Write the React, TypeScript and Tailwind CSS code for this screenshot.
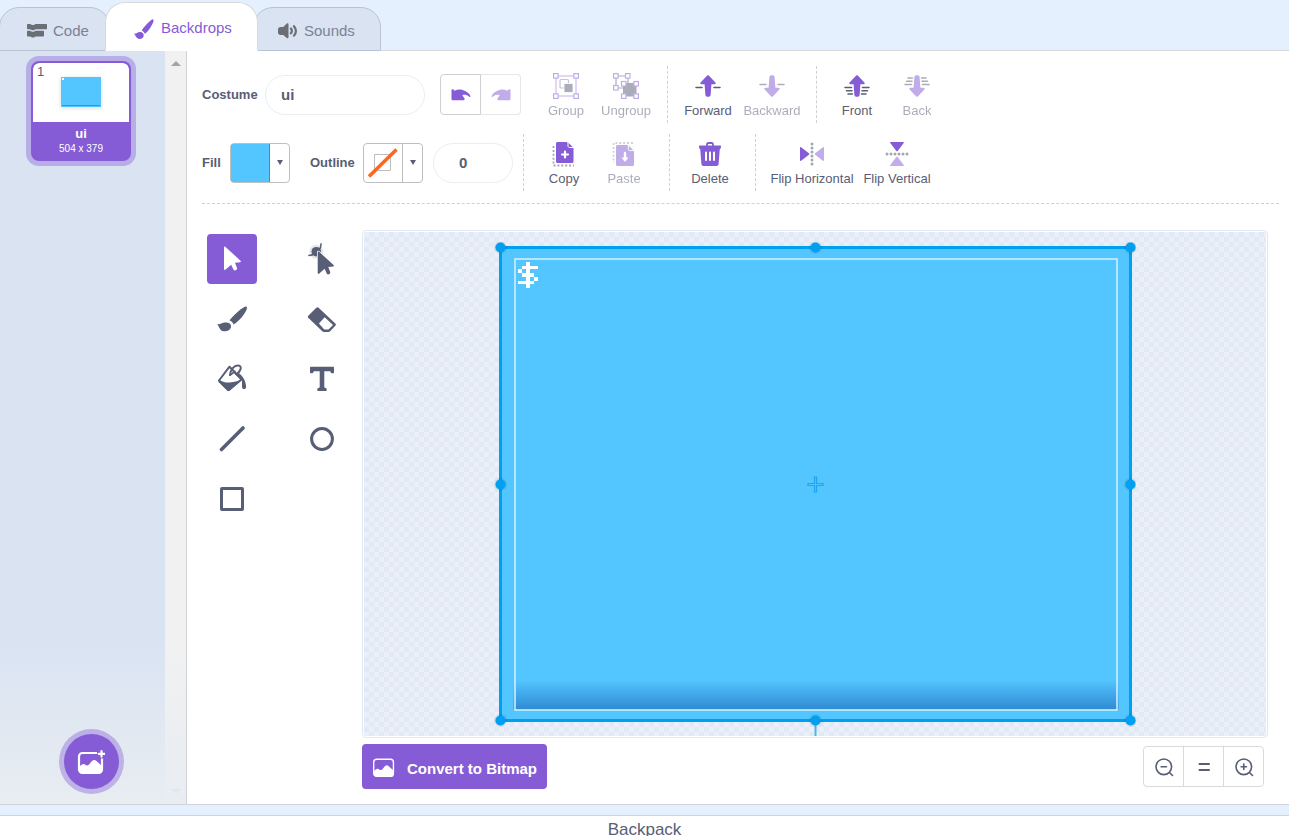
import { useState } from "react";
import type { ReactNode } from "react";
import clsx from "clsx";

const PURPLE = "#855cd6";
const INK = "#575e75";

/* Icons */

function BrushIcon({ className }: { className: string }) {
  return (
    <svg viewBox="0 0 20 20" className={className} fill="currentColor" aria-hidden="true">
      <path d="M19 .5c.7.5.7 1.500.2 2.800-1.300 3.200-3.900 7.300-6.200 9.800-.8.800-1.500 1.400-2.400 1.700-.3-1.600-1.200-2.600-2.700-3.100.2-.9.7-1.700 1.400-2.600C11.500 6.200 14.700 2.700 17.200.9c.8-.6 1.400-.7 1.800-.4z" />
      <path d="M.2 15c-.2-.4.1-.6.5-.4.8.3 1.300.1 2.200-.6 1.100-.8 2.400-1.300 4-1 2.300.4 3.200 2.400 2.700 4.300-.6 2-2.600 2.900-4.700 2.600-2.100-.4-2.900-1.900-3.700-3.600-.2-.5-.6-.8-1-1.300z" />
    </svg>
  );
}

function CodeIcon() {
  return (
    <svg viewBox="0 0 20 14" className="h-3.5 w-5" fill="#6b6f75" aria-hidden="true">
      <path d="M0 .8C0 .3.3 0 .8 0h2.400c.6 0 .8 1 2 1h1.300c1.200 0 1.400-1 2-1h10.700c.5 0 .8.3.8.800v3.700c0 .5-.3.8-.8.8H8.500c-.6 0-.8 1-2 1H5.200c-1.200 0-1.400-1-2-1H.8c-.5 0-.8-.3-.8-.8z" />
      <path d="M0 7.500c0-.5.3-.8.800-.8h2.400c.6 0 .8 1 2 1h1.300c1.200 0 1.400-1 2-1h7.700c.5 0 .8.3.8.800v4.200c0 .5-.3.8-.8.8H8.500c-.6 0-.8 1-2 1H5.200c-1.200 0-1.400-1-2-1H.8c-.5 0-.8-.3-.8-.8z" />
    </svg>
  );
}

function SoundIcon() {
  return (
    <svg viewBox="0 0 20 16" className="h-4 w-5" fill="#6b6f75" aria-hidden="true">
      <path d="M8.800.5c.7-.5 1.700-.1 1.700.8v13c0 .9-1 1.300-1.700.8L5.200 12H2.500C1 12 0 11 0 9.500v-3C0 5 1 3.900 2.500 3.900h2.700z" />
      <path d="M12.900 5.500q1.900 2.400 0 4.800M16 3.200q3.800 4.700 0 9.400" fill="none" stroke="#6b6f75" strokeWidth="2.200" strokeLinecap="round" />
    </svg>
  );
}

function UndoIcon({ className }: { className?: string }) {
  return (
    <svg viewBox="0 0 20 12" className={clsx("h-3 w-5", className)} fill={PURPLE} aria-hidden="true">
      <path d="M.5 1.500C.5.300 1.800-.1 2.700.8l1 .9C6 .5 8.500.200 11.500.900c4 1 6.800 3.300 7.900 6.100.3.8-.6 1.300-1.200.7-1.500-1.400-3.200-2-5.200-2-1.500 0-1.900.5-1.200 1.300l1.400 1.900c.8 1 .4 2.400-1 2.400H1.800C1 11.300.5 10.700.5 10z" />
    </svg>
  );
}

function Handles({ points }: { points: number[][] }) {
  return (
    <g fill="#fff" stroke={PURPLE} strokeWidth="1.200">
      {points.map(([x, y]) => (
        <rect key={`${x}-${y}`} x={x} y={y} width="4.500" height="4.500" />
      ))}
    </g>
  );
}

function GroupIcon() {
  return (
    <svg viewBox="0 0 26 26" className="size-[26px]" aria-hidden="true">
      <path d="M3 3h20v20H3z" fill="none" stroke={PURPLE} />
      <rect x="7" y="6.500" width="8.500" height="8.500" rx="1" fill="none" stroke={INK} strokeOpacity=".7" strokeWidth="1.200" />
      <rect x="11" y="10.500" width="9" height="9" rx="1" fill={INK} stroke="#fff" strokeWidth=".8" />
      <Handles points={[[.6, .6], [20.900, .6], [.6, 20.900], [20.900, 20.900]]} />
    </svg>
  );
}

function UngroupIcon() {
  return (
    <svg viewBox="0 0 26 26" className="size-[26px]" aria-hidden="true">
      <path d="M3 3h12v12H3z" fill="none" stroke={INK} strokeWidth="1.200" />
      <rect x="10" y="10" width="13.500" height="13.500" rx="3" fill={INK} />
      <Handles points={[[.6, .6], [12.500, .6], [.6, 12.500], [8.500, 8.500], [20.900, 8.500], [8.500, 20.900], [20.900, 20.900]]} />
    </svg>
  );
}

const ARROW_UP = "M12.200 2.600c.5-.6 1.100-.6 1.600 0l6.600 7c.7.800.3 1.700-.7 1.700h-3.300l-.8 10.700c-.1 1.200-.9 1.800-2.600 1.800s-2.500-.6-2.600-1.800L9.600 11.300H6.300c-1 0-1.400-.9-.7-1.700z";

function ArrowIcon({ down = false, lines }: { down?: boolean; lines: string }) {
  return (
    <svg viewBox="0 0 26 26" className="size-[26px]" aria-hidden="true">
      <g transform={down ? "rotate(180 13 13)" : undefined}>
        <path d={lines} stroke={INK} strokeWidth="1.500" strokeLinecap="round" />
        <path d={ARROW_UP} fill={PURPLE} />
      </g>
    </svg>
  );
}

const ONE_LINE = "M1 14.500h6M19 14.500h6";
const MANY_LINES = "M1 14.500h6.500M18.500 14.500H25M2.500 17.700h5.500M18 17.700h5.500M4 20.900h4.500M17.500 20.900H22";

function CopyIcon() {
  return (
    <svg viewBox="0 0 26 26" className="size-[26px]" aria-hidden="true">
      <path d="M2.500 5v19.500H23" fill="none" stroke={INK} strokeOpacity=".55" strokeWidth="1.800" strokeDasharray="2 1.900" />
      <path d="M6.500 1H16l6.500 6.500v13c0 .9-.6 1.500-1.500 1.500H6.500c-.9 0-1.500-.6-1.500-1.500v-18C5 1.600 5.600 1 6.500 1z" fill={PURPLE} />
      <path d="M17 .8l5.800 5.700h-4.300c-.9 0-1.500-.6-1.500-1.500z" fill={PURPLE} stroke="#fff" strokeWidth="1" />
      <path d="M14 10.500v6M11 13.500h6" stroke="#fff" strokeWidth="2.200" strokeLinecap="round" />
    </svg>
  );
}

function PasteIcon() {
  return (
    <svg viewBox="0 0 26 26" className="size-[26px]" aria-hidden="true">
      <path d="M22 2H2.500v20" fill="none" stroke={INK} strokeOpacity=".55" strokeWidth="1.800" strokeDasharray="2 1.900" />
      <path d="M6.500 4H17l6 6v13.500c0 .9-.6 1.500-1.500 1.500h-15c-.9 0-1.500-.6-1.500-1.500v-18C5 4.600 5.600 4 6.500 4z" fill={PURPLE} />
      <path d="M17.300 3.700l5.900 5.900h-4.400c-.9 0-1.500-.6-1.500-1.500z" fill={PURPLE} stroke="#fff" strokeWidth="1" />
      <path d="M14 12v6" stroke="#fff" strokeWidth="2.400" strokeLinecap="round" />
      <path d="M10.500 16.500h7L14 21z" fill="#fff" />
    </svg>
  );
}

function TrashIcon() {
  return (
    <svg viewBox="0 0 26 26" className="size-[26px]" aria-hidden="true">
      <path d="M10 5V3.500c0-1 .5-1.500 1.300-1.500h3.400c.8 0 1.300.5 1.300 1.500V5" fill="none" stroke={PURPLE} strokeWidth="1.800" />
      <path d="M3.200 4.500h19.600c.9 0 1.300.5 1.200 1.300l-.2 1.200c-.1.600-.4.900-1 1l-1.200 15c-.1 1.200-.9 2-2.100 2H6.500c-1.200 0-2-.8-2.100-2L3.200 8c-.6-.1-.9-.4-1-1L2 5.800c-.1-.8.3-1.300 1.200-1.300z" fill={PURPLE} />
      <path d="M9 11.500v7.500M13 11.500v7.500M17 11.500v7.500" stroke="#fff" strokeWidth="2" strokeLinecap="round" />
    </svg>
  );
}

function FlipIcon({ vertical = false }: { vertical?: boolean }) {
  return (
    <svg viewBox="0 0 26 26" className="size-[26px]" aria-hidden="true">
      <g transform={vertical ? "rotate(90 13 13)" : undefined}>
        <path d="M1 6.800c0-.7.600-.9 1.100-.5l7.800 6c.5.400.5 1 0 1.400l-7.800 6c-.5.400-1.100.2-1.100-.5z" fill={PURPLE} />
        <path d="M25 6.800c0-.7-.6-.9-1.100-.5l-7.800 6c-.5.400-.5 1 0 1.400l7.800 6c.5.400 1.100.2 1.100-.5z" fill={PURPLE} fillOpacity=".5" />
        <g fill={INK} fillOpacity=".55">
          {[3, 7, 11, 15, 19, 23].map((y) => (
            <circle key={y} cx="13" cy={y} r="1.500" />
          ))}
        </g>
      </g>
    </svg>
  );
}

function ImageIcon({ plus = false, className }: { plus?: boolean; className: string }) {
  return (
    <svg viewBox="0 0 28 26" className={className} aria-hidden="true">
      <rect x="2" y="4" width="23" height="20" rx="3.500" fill="none" stroke="#fff" strokeWidth={plus ? 2.200 : 1.600} />
      <path d="M2 18c2-2 4-4 6-2.500 1.500 1.200 2.500 1.500 4 0l3-3.500c1.500-1.500 3-1.500 4.500 0L25 17v3.500c0 2-1.500 4-3.500 4h-16c-2 0-3.500-2-3.500-4z" fill="#fff" />
      {plus && (
        <>
          <path d="M20 0h8v9.500h-8z" fill={PURPLE} />
          <path d="M24.500 2v5.600M21.700 4.800h5.600" stroke="#fff" strokeWidth="2.200" strokeLinecap="round" />
        </>
      )}
    </svg>
  );
}

const POINTER = "M12 8.500c0-.9.9-1.200 1.500-.6l15 13.800c.7.700.4 1.500-.5 1.500l-5 .6 2 5.200c.7 2-2.700 3.500-3.600 1.500l-2.200-4.800-5.600 4.900c-.7.600-1.600.3-1.600-.6z";

const TOOLS: { name: string; icon: ReactNode }[] = [
  {
    name: "Select",
    icon: <path d={POINTER} fill="currentColor" />,
  },
  {
    name: "Reshape",
    icon: (
      <>
        <circle cx="14.300" cy="12.700" r="7" fill="#575e75" fillOpacity=".15" />
        <circle cx="14.300" cy="12.700" r="4.800" fill="currentColor" />
        <path d="M6.300 16.500q5 0 6.500-2.500M19 4.300q.3 4-2 6.500" fill="none" stroke="currentColor" strokeWidth="1.500" />
        <path d={POINTER} transform="translate(4.200 5.200) scale(.96)" fill="currentColor" stroke="#fff" strokeWidth="1.600" paintOrder="stroke" />
      </>
    ),
  },
  {
    name: "Brush",
    icon: (
      <svg x="5" y="7" width="30" height="26" viewBox="0 0 30 26" fill="currentColor">
        <path d="M29.500.8c.8.600.5 2-.4 3.900-2 4-5.800 8.600-9.400 11.600-1.300 1.100-2.200 1.700-3.200 2.200-.5-2-1.700-3.300-3.900-4 .4-.9 1.300-2 2.500-3.200C18.200 8 22.700 3.500 26.900 1.200c1.200-.6 2.100-.8 2.600-.4z" />
        <path d="M.4 18.500c-.2-.4.100-.7.600-.5 1 .4 1.800.300 3-.4 1.600-.8 3.500-1.300 5.800-1.100 3.200.2 4.700 2.500 4.100 5-.8 2.800-4 4.200-7.300 3.700-3-.4-4-2.600-4.900-4.800-.3-.7-.8-1.200-1.300-1.900z" />
      </svg>
    ),
  },
  {
    name: "Eraser",
    icon: (
      <>
        <path d="M14.300 8.800c.8-.8 1.500-.8 2.300 0L33.300 24.500c.8.800.8 1.500 0 2.300l-5.200 5.400c-.6.600-1 .8-1.700.8H22c-.7 0-1.200-.2-1.700-.7L6.500 19c-.8-.8-.8-1.700 0-2.500z" fill="currentColor" />
        <path d="M22.700 18.300l8.300 7.700-4.500 4.500h-4.200l-5.400-6z" fill="#fff" />
      </>
    ),
  },
  {
    name: "Fill",
    icon: (
      <>
        <path d="M17.500 7.700L7 21.500l9.500 9.500 13-10.500z" fill="none" stroke="currentColor" strokeWidth="2" strokeLinejoin="round" />
        <path d="M6.500 20.500c4 2.500 7 3.300 11.500 3 4.500-.5 7-1.500 12-2.500L18 31.500c-.9.800-2 .8-2.900 0L6.500 23z" fill="currentColor" />
        <path d="M22 14.500l8 6.500v6.500c0 3.800 4.300 3.500 4.100 0C33.800 22 31 17 27 14.200" fill="currentColor" />
        <path d="M18 16c.5-5 4-10 8.500-9.500 4.500.8 1.500 6.500-2 8.500" fill="none" stroke="currentColor" strokeWidth="2" strokeLinecap="round" />
        <path d="M17.500 16.500l6-4.500" stroke="currentColor" strokeWidth="1.600" />
      </>
    ),
  },
  {
    name: "Text",
    icon: <path d="M9 7.700h22c.6 0 1 .4 1 1v4.500c0 .6-.4 1-1 1h-1.200c-.6 0-1-.3-1.200-.9l-.3-1H22.300v16.200l1.500.4c.6.200.9.600.9 1.100v1c0 .6-.4 1-1 1h-7.400c-.6 0-1-.4-1-1v-1c0-.5.3-.9.9-1.100l1.500-.4V12.300h-6l-.3 1c-.2.600-.6.900-1.200.9H9c-.6 0-1-.4-1-1V8.700c0-.6.4-1 1-1z" fill="currentColor" />,
  },
  {
    name: "Line",
    icon: <path d="M9.500 30.500l21.500-21.500" stroke="currentColor" strokeWidth="3.600" strokeLinecap="round" />,
  },
  {
    name: "Circle",
    icon: <circle cx="20" cy="20" r="10.400" fill="none" stroke="currentColor" strokeWidth="3" />,
  },
  {
    name: "Rectangle",
    icon: <rect x="9.500" y="9.500" width="21" height="21" rx=".5" fill="none" stroke="currentColor" strokeWidth="3" />,
  },
];

/* Small parts */

interface ActionProps {
  label: string;
  icon: ReactNode;
  disabled?: boolean;
  className?: string;
}

function Action({ label, icon, disabled, className = "w-15" }: ActionProps) {
  return (
    <button
      disabled={disabled}
      className={clsx("flex flex-col items-center gap-0.5 pt-1 text-[13px] leading-5 whitespace-nowrap disabled:opacity-50", className)}
    >
      {icon}
      {label}
    </button>
  );
}

function Divider({ className }: { className: string }) {
  return <div className={clsx("h-[57px] shrink-0 border-l border-dashed border-[#d0d0d0]", className)} />;
}

interface SwatchProps {
  id: string;
  children: ReactNode;
}

function Swatch({ id, children }: SwatchProps) {
  return (
    <button id={id} className="flex h-10 w-15 overflow-hidden rounded border border-[#bfbfbf]">
      {children}
      <span className="flex h-full flex-1 items-center justify-center">
        <svg viewBox="0 0 6 5" className="h-[5px] w-1.5" aria-hidden="true">
          <path d="M0 0h6L3 5z" fill={INK} />
        </svg>
      </span>
    </button>
  );
}

function Tabs() {
  const tab = "flex items-center rounded-t-[20px] border";
  const idle = "h-11 border-[#b9c3d3] bg-[#d9e3f2] text-[#7c8294]";
  return (
    <nav className="flex h-[51px] items-end text-[15px]">
      <button className={clsx(tab, idle, "-ml-px w-[111px] gap-1.5 pt-1 pl-[27px]")}>
        <CodeIcon />
        Code
      </button>
      <button className={clsx(tab, "z-10 -ml-[5px] h-[49px] w-[153px] gap-[7px] border-[#d9d9d9] border-b-white bg-white pt-1 pl-7 text-[#855cd6]")}>
        <BrushIcon className="size-5" />
        Backdrops
      </button>
      <button className={clsx(tab, idle, "-ml-[5px] w-32 gap-1.5 pt-1 pl-6")}>
        <SoundIcon />
        Sounds
      </button>
      <div className="flex-1 self-end border-b border-[#d9d9d9]" />
    </nav>
  );
}

function Sidebar() {
  return (
    <aside className="relative flex w-[187px] shrink-0 border-r border-[#d0d3d8] bg-[#d9e3f2]">
      <div className="flex-1 pt-2.5 pl-[31px]">
        <button className="flex size-[100px] flex-col overflow-hidden rounded-lg border-2 border-[#855cd6] bg-[#855cd6] ring-5 ring-[#855cd6]/40">
          <div className="flex h-[59px] w-full items-start rounded-t-md bg-white pl-1">
            <span className="w-6 text-left text-[13px] leading-[18px]">1</span>
            <svg viewBox="0 0 40 30" className="mt-3.5 h-[30px] w-10 drop-shadow-sm" aria-hidden="true">
              <path d="M0 0h40v30H0z" fill="#53c5ff" />
              <path d="M1 28.500h38" stroke="#3498d8" />
              <path d="M1 1h2v2H1z" fill="#fff" />
            </svg>
          </div>
          <div className="flex w-full flex-col items-center pt-1 text-white">
            <span className="text-[13px] leading-4 font-bold">ui</span>
            <span className="text-[10px] leading-3.5">504 x 379</span>
          </div>
        </button>
      </div>
      <div className="flex w-[21px] flex-col items-center justify-between bg-[#f1f1f1] py-2.5">
        <svg viewBox="0 0 10 5" className="h-[5px] w-2.5" aria-hidden="true">
          <path d="M0 5h10L5 0z" fill="#a3a3a3" />
        </svg>
        <svg viewBox="0 0 10 5" className="h-[5px] w-2.5" aria-hidden="true">
          <path d="M0 0h10L5 5z" fill="#a3a3a3" />
        </svg>
      </div>
      <div className="absolute inset-x-0 bottom-0 flex h-[165px] items-end justify-center bg-linear-to-b from-[#e8edf1]/0 to-[#e8edf1] pr-1 pb-[15px]">
        <button aria-label="Choose a Backdrop" className="flex size-[55px] items-center justify-center rounded-full bg-[#855cd6] ring-5 ring-[#855cd6]/40">
          <ImageIcon plus className="h-[26px] w-7" />
        </button>
      </div>
    </aside>
  );
}

function Toolbar() {
  const [name, setName] = useState("ui");
  const [width, setWidth] = useState("0");
  const pill = "h-10 rounded-full border border-[#e9eef2] bg-white text-[15px] font-bold outline-none";

  return (
    <div className="flex flex-col gap-[11px] border-b border-dashed border-[#d0d0d0] pb-3">
      <div className="flex h-[57px] items-center">
        <label htmlFor="costume" className="w-[63px] text-[13px] font-bold">Costume</label>
        <input id="costume" value={name} onChange={(e) => setName(e.target.value)} className={clsx(pill, "w-40 px-[15px]")} />
        <div className="ml-[15px] flex">
          <button aria-label="Undo" className="flex h-[41px] w-[41px] items-center justify-center rounded-l border border-[#d0d0d0]">
            <UndoIcon />
          </button>
          <button aria-label="Redo" disabled className="flex h-[41px] w-10 items-center justify-center rounded-r border border-l-0 border-[#e6e6e6]">
            <UndoIcon className="-scale-x-100 opacity-50" />
          </button>
        </div>
        <Action label="Group" icon={<GroupIcon />} disabled className="ml-[15px] w-15" />
        <Action label="Ungroup" icon={<UngroupIcon />} disabled />
        <Divider className="ml-[11px]" />
        <Action label="Forward" icon={<ArrowIcon lines={ONE_LINE} />} className="ml-2 w-16" />
        <Action label="Backward" icon={<ArrowIcon down lines={ONE_LINE} />} disabled className="w-16" />
        <Divider className="ml-3" />
        <Action label="Front" icon={<ArrowIcon lines={MANY_LINES} />} className="ml-2.5 w-15" />
        <Action label="Back" icon={<ArrowIcon down lines={MANY_LINES} />} disabled />
      </div>

      <div className="flex h-[57px] items-center">
        <label htmlFor="fill" className="w-7 text-[13px] font-bold">Fill</label>
        <Swatch id="fill">
          <span className="-my-px -ml-px h-10 w-10 rounded-l border border-[#3a93c4] bg-[#53c5ff]" />
        </Swatch>
        <label htmlFor="outline" className="ml-5 w-[53px] text-[13px] font-bold">Outline</label>
        <Swatch id="outline">
          <span className="h-full w-[39px] border-r border-[#bfbfbf]">
            <svg viewBox="0 0 38 38" className="size-[38px]" aria-hidden="true">
              <path d="M10.500 10.500h16v16h-16z" fill="none" stroke="#bfbfbf" />
              <path d="M5 32.500L32.500 5.500" stroke="#ff661a" strokeWidth="3.600" />
            </svg>
          </span>
        </Swatch>
        <input aria-label="Outline width" value={width} onChange={(e) => setWidth(e.target.value)} className={clsx(pill, "ml-2.5 w-20 pl-[25px]")} />
        <Divider className="ml-2.5" />
        <Action label="Copy" icon={<CopyIcon />} className="ml-2.5 w-15" />
        <Action label="Paste" icon={<PasteIcon />} disabled />
        <Divider className="ml-[15px]" />
        <Action label="Delete" icon={<TrashIcon />} className="ml-2.5 w-15" />
        <Divider className="ml-[15px]" />
        <Action label="Flip Horizontal" icon={<FlipIcon />} className="ml-3 w-[88px]" />
        <Action label="Flip Vertical" icon={<FlipIcon vertical />} className="w-[82px]" />
      </div>
    </div>
  );
}

// Dollar sprite, four units per cell
const DOLLAR = "M8 0h4v4H8zM4 4h16v4H4zM0 8h4v4H0zM8 8h4v4H8zM4 12h12v4H4zM8 16h4v4H8zM16 16h4v4h-4zM0 20h16v4H0zM8 24h4v4H8z";

function Artwork() {
  const handles = [[5, 5], [320, 5], [635, 5], [5, 242], [635, 242], [5, 478], [320, 478], [635, 478]];
  return (
    <svg viewBox="-1 -1 642 495" className="h-[495px] w-[642px] shrink-0" aria-label="Backdrop artwork">
      <defs>
        <linearGradient id="shade" x1="0" y1="0" x2="0" y2="1">
          <stop offset="0" stopColor="#53c5ff" />
          <stop offset="1" stopColor="#2f8ad2" />
        </linearGradient>
        <filter id="glow" x="-50%" y="-50%" width="200%" height="200%">
          <feDropShadow dx="0" dy="0" stdDeviation="1.200" floodColor="#000" floodOpacity=".4" />
        </filter>
      </defs>
      <g transform="translate(.5 -.5)">
        <path d="M5 5h630v473H5z" fill="#53c5ff" />
        <path d="M18 438h605v29H18z" fill="url(#shade)" />
        <path d="M19.500 16.500h602v451h-602z" fill="none" stroke="#d8f1ff" strokeWidth="1.500" />
        <g transform="translate(22.500 19.500)" fill="#fff" shapeRendering="crispEdges">
          <path d={DOLLAR} transform="scale(1 .93)" />
        </g>
        <path d="M5 5h630v473H5z" fill="none" stroke="#009ff0" strokeWidth="3" />
        <path d="M320 478v18" stroke="#4db8f0" strokeWidth="2" />
        <path d="M319 234.500h2v6.500h6.500v2H321v6.500h-2V243h-6.500v-2h6.500z" fill="#53c5ff" stroke="#1ba5f3" strokeWidth="1.200" />
        <g fill="#009ff0" filter="url(#glow)">
          {handles.map(([x, y]) => (
            <circle key={`${x}-${y}`} cx={x} cy={y} r="5" />
          ))}
        </g>
      </g>
    </svg>
  );
}

function ToolPalette() {
  const [active, setActive] = useState("Select");
  return (
    <div className="grid shrink-0 grid-cols-[50px_50px] content-start gap-x-10 gap-y-2.5 pt-1">
      {TOOLS.map(({ name, icon }) => (
        <button
          key={name}
          aria-label={name}
          onClick={() => setActive(name)}
          className={clsx("flex size-[50px] items-center justify-center rounded", active === name ? "bg-[#855cd6] text-white" : "text-[#575e75]")}
        >
          <svg viewBox="0 0 40 40" className="size-10" aria-hidden="true">
            {icon}
          </svg>
        </button>
      ))}
    </div>
  );
}

function CanvasControls() {
  const zoomButton = "flex h-[39px] w-10 items-center justify-center border-r border-[#d9d9d9] last:w-[39px] last:border-r-0";
  return (
    <div className="flex items-start justify-between pr-1">
      <button className="flex h-[45px] items-center gap-[11px] rounded bg-[#855cd6] px-2.5 text-[15px] font-bold text-white">
        <ImageIcon className="size-6" />
        <span className="pt-1.5">Convert to Bitmap</span>
      </button>
      <div className="mt-0.5 flex overflow-hidden rounded border border-[#d9d9d9]">
        <button aria-label="Zoom out" className={zoomButton}>
          <svg viewBox="0 0 20 20" className="size-5" fill="none" stroke={INK} strokeWidth="1.600" strokeLinecap="round" aria-hidden="true">
            <circle cx="9.800" cy="9.800" r="7.800" />
            <path d="M15.500 15.500l3 3M7.100 9.800h5.400" />
          </svg>
        </button>
        <button aria-label="Reset zoom" className={zoomButton}>
          <svg viewBox="0 0 20 20" className="size-5" stroke={INK} strokeWidth="2" strokeLinecap="round" aria-hidden="true">
            <path d="M5.500 7h9.500M5.500 13h9.500" />
          </svg>
        </button>
        <button aria-label="Zoom in" className={zoomButton}>
          <svg viewBox="0 0 20 20" className="size-5" fill="none" stroke={INK} strokeWidth="1.600" strokeLinecap="round" aria-hidden="true">
            <circle cx="9.800" cy="9.800" r="7.800" />
            <path d="M15.500 15.500l3 3M7.100 9.800h5.400M9.800 7.100v5.400" />
          </svg>
        </button>
      </div>
    </div>
  );
}

export default function App() {
  return (
    <div className="flex h-screen flex-col overflow-hidden bg-[#e5f0ff] font-['Liberation_Sans',Arial,sans-serif] text-[#575e75]">
      <Tabs />

      <div className="flex min-h-0 flex-1 border-b border-[#d0d3d8] bg-white">
        <Sidebar />
        <main className="flex min-w-0 flex-1 flex-col gap-[26px] pt-[15px] pr-2.5 pb-[15px] pl-[15px]">
          <Toolbar />
          <div className="flex min-h-0 flex-1 gap-[15px] pr-[11px] pl-[5px]">
            <ToolPalette />
            <div className="flex min-w-0 flex-1 flex-col gap-1.5">
              <div className="min-h-0 flex-1 rounded border border-[#dfe8f1] p-px">
                <div className="flex h-full justify-center overflow-hidden bg-[repeating-conic-gradient(#e0e9f4_0_25%,#eaeff9_0_50%)] bg-[length:10px_10px] pt-2.5">
                  <Artwork />
                </div>
              </div>
              <CanvasControls />
            </div>
          </div>
        </main>
      </div>

      <button className="mt-2.5 h-[21px] shrink-0 border-t border-[#d0d3d8] bg-white pt-1 text-[17px] leading-5">
        Backpack
      </button>
    </div>
  );
}
